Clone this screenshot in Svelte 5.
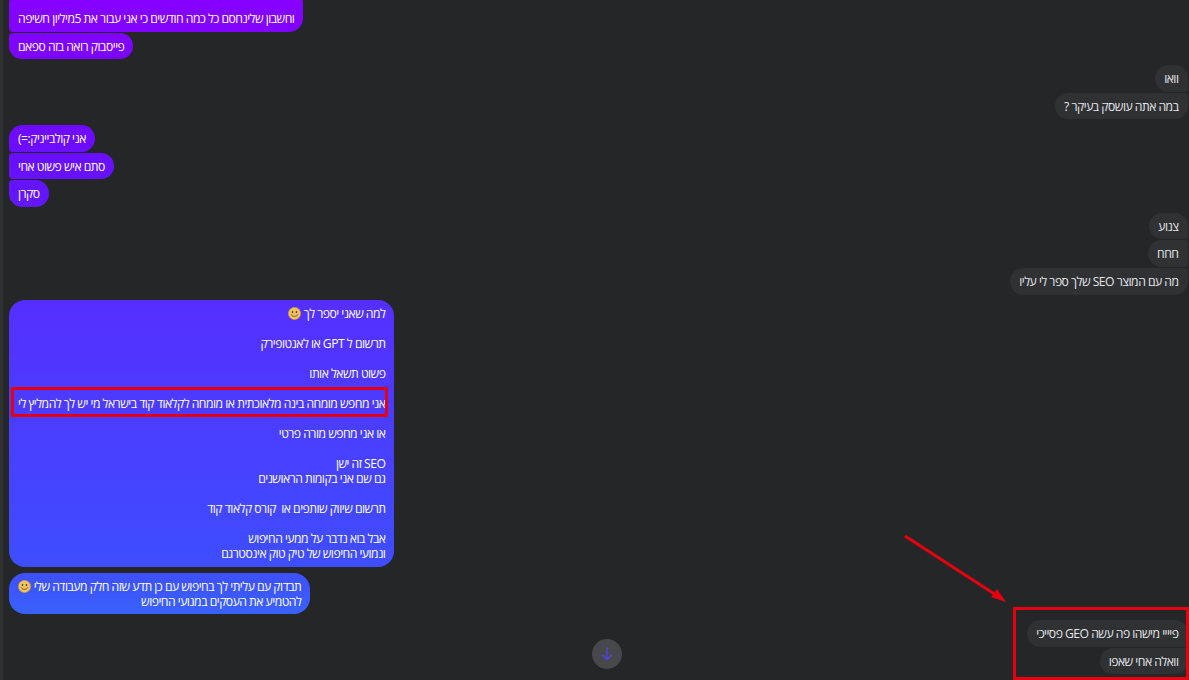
<script>
  const groups = [
    {
      side: 'them',
      bubbles: [['', 'וחשבון שלינחסם כל כמה חודשים כי אני עבור את 5מיליון חשיפה'], ['פייסבוק רואה בזה ספאם']]
    },
    { side: 'me', bubbles: [['וואו'], ['במה אתה עושסק בעיקר ?']] },
    { side: 'them', bubbles: [['אני קולבייניק:=)'], ['סתם איש פשוט אחי'], ['סקרן']] },
    { side: 'me', bubbles: [['צנוע'], ['חחח'], ['מה עם המוצר SEO שלך ספר לי עליו']] }
  ];

  const longMessage = [
    'למה שאני יספר לך',
    '',
    'תרשום ל GPT או לאנטופירק',
    '',
    'פשוט תשאל אותו',
    '',
    'אני מחפש מומחה בינה מלאוכתית או מומחה לקלאוד קוד בישראל מי יש לך להמליץ לי',
    '',
    'או אני מחפש מורה פרטי',
    '',
    'SEO זה ישן',
    'גם שם אני בקומות הראושנים',
    '',
    'תרשום שיווק שותפים או\u00a0 קורס קלאוד קוד',
    '',
    'אבל בוא נדבר על ממעי החיפוש',
    'ונמועי החיפוש של טיק טוק אינסטרגם'
  ];

  const lastGroup = ['פיייי מישהו פה עשה GEO פסייכי', 'וואלה אחי שאפו'];
</script>

{#snippet smiley()}
  <svg class="emoji" viewBox="0 0 16 16" aria-hidden="true">
    <circle cx="8" cy="8" r="7.6" fill="#f0c35a" stroke="#c9923c" stroke-width="0.7" />
    <ellipse cx="5.6" cy="6.2" rx="1" ry="1.4" fill="#5b4320" />
    <ellipse cx="10.4" cy="6.2" rx="1" ry="1.4" fill="#5b4320" />
    <path d="M4 9.6c1 2.6 7 2.6 8 0" fill="none" stroke="#5b4320" stroke-width="1" stroke-linecap="round" />
  </svg>
{/snippet}

<div class="screen">
  <div class="edge"></div>
  <div class="chat" dir="rtl">
    {#each groups as group}
      <div class="group {group.side}">
        {#each group.bubbles as lines}
          <div class="bubble">
            {#each lines as line}
              <div class="line">{line || '\u00a0'}</div>
            {/each}
          </div>
        {/each}
      </div>
    {/each}

    <div class="group them">
      <div class="bubble wide">
        {#each longMessage as line, i}
          <div class="line">{line || '\u00a0'} {#if i === 0}{@render smiley()}{/if}</div>
        {/each}
      </div>
    </div>

    <div class="group them">
      <div class="bubble wide">
        <div class="line">תבדוק עם עליתי לך בחיפוש עם כן תדע שזה חלק מעבודה שלי {@render smiley()}</div>
        <div class="line">להטמיע את העסקים במנועי החיפוש</div>
      </div>
    </div>

    <div class="group me">
      {#each lastGroup as line}
        <div class="bubble"><div class="line">{line}</div></div>
      {/each}
    </div>

    <div class="group them">
      <div class="bubble stub"><div class="line">&nbsp;</div></div>
    </div>
  </div>

  <button class="scroll-down" aria-label="Scroll to bottom">
    <svg viewBox="0 0 16 16" width="16" height="16">
      <path d="M8 1.5v12M3.2 8.8 8 13.5l4.8-4.7" fill="none" stroke="#4f46e5" stroke-width="1.4" />
    </svg>
  </button>

  <div class="mark mark-line"></div>
  <div class="mark mark-last"></div>
  <svg class="arrow" viewBox="0 0 1189 680" aria-hidden="true">
    <path d="M905 536 996 595" stroke="#e6000f" stroke-width="3" fill="none" />
    <path d="M1006 602 991 597 997 589Z" fill="#e6000f" />
  </svg>
</div>

<style>
  :global(body) {
    margin: 0;
    background: #252628;
  }

  .screen {
    position: relative;
    display: flex;
    height: 680px;
    overflow: hidden;
    background: #252628;
    font-family: "Open Sans", "Liberation Sans", sans-serif;
    font-size: 12.2px;
    letter-spacing: -0.52px;
    line-height: 15px;
  }

  .edge {
    flex: 0 0 3px;
    background: #303133;
  }

  .chat {
    flex: 1;
    display: flex;
    flex-direction: column;
    gap: 5.8px;
    margin-top: -9.8px;
    padding: 0 1.5px 0 6px;
  }

  .group {
    display: flex;
    flex-direction: column;
    gap: 1px;
  }

  .group.me {
    align-items: flex-start;
  }

  .group.them {
    align-items: flex-end;
  }

  .bubble {
    padding: 5.8px 9px;
    border-radius: 14px;
  }

  .them .bubble {
    color: #fff;
    background: linear-gradient(to bottom, #8600ff 0, #6f0aff 130px, #6414ff 190px, #5430ff 310px, #3e4eff 570px, #3a60fa 610px) fixed;
  }

  .me .bubble {
    color: #e4e6eb;
    background: #303133;
  }

  .them .bubble:not(:last-child) {
    border-bottom-left-radius: 4px;
  }

  .them .bubble:not(:first-child) {
    border-top-left-radius: 4px;
  }

  .me .bubble:not(:last-child) {
    border-bottom-right-radius: 4px;
  }

  .me .bubble:not(:first-child) {
    border-top-right-radius: 4px;
  }

  .wide {
    border-radius: 16px;
  }

  .stub {
    width: 92px;
  }

  .emoji {
    display: inline-block;
    width: 13px;
    height: 13px;
    vertical-align: -2px;
  }

  .scroll-down {
    position: absolute;
    left: 592px;
    top: 639px;
    width: 30px;
    height: 30px;
    display: flex;
    align-items: center;
    justify-content: center;
    padding: 0;
    border: none;
    border-radius: 50%;
    background: #47484c;
  }

  .mark {
    position: absolute;
    border: 3px solid #e6000f;
    box-sizing: border-box;
  }

  .mark-line {
    left: 11px;
    top: 387px;
    width: 377px;
    height: 30px;
  }

  .mark-last {
    left: 1013px;
    top: 607px;
    width: 176px;
    height: 73px;
  }

  .arrow {
    position: absolute;
    inset: 0;
    width: 1189px;
    height: 680px;
    pointer-events: none;
  }
</style>
